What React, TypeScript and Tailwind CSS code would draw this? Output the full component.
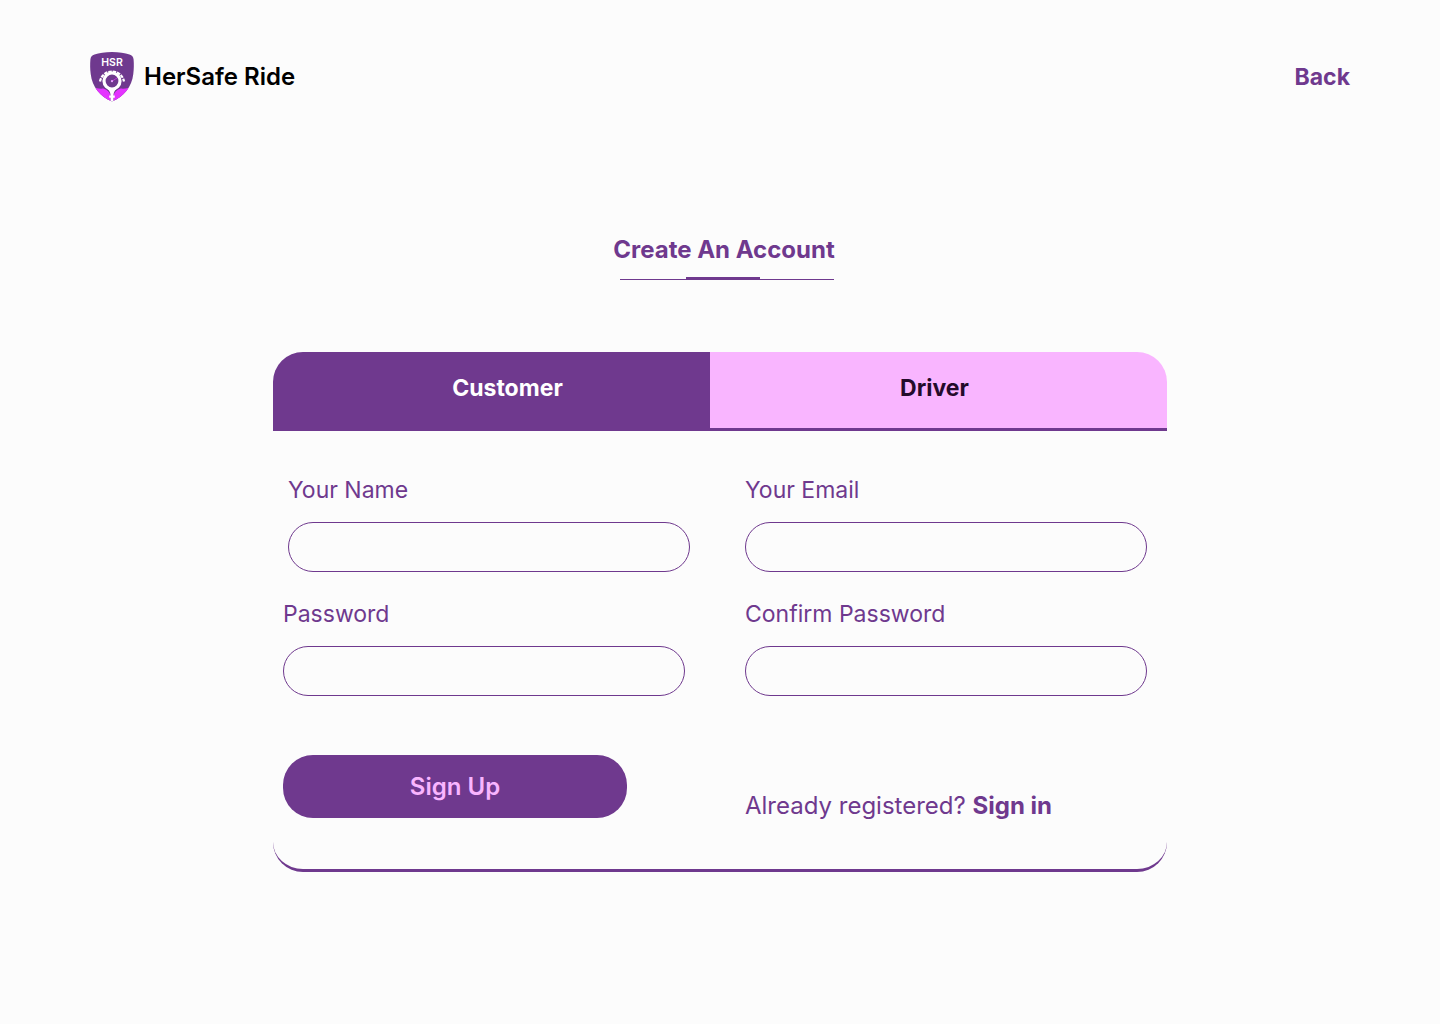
import { useState } from "react";

function Logo() {
  return (
    <svg viewBox="0 0 44 50" className="h-[50px] w-11 shrink-0" aria-hidden="true">
      <defs>
        <clipPath id="shield">
          <path d="M22 0C29 0 35 .9 39.5 2.4C42 3.2 43.4 4.8 43.6 7.4C44 12 43.9 17 43.3 22C41.8 35 34 44.5 22 49.6C10 44.5 2.2 35 .7 22C.1 17 0 12 .4 7.4C.6 4.8 2 3.2 4.5 2.4C9 .9 15 0 22 0Z" />
        </clipPath>
      </defs>
      <g clipPath="url(#shield)">
        <rect width="44" height="50" fill="#6f398e" />
        <path d="M0 34C5 36 9 37 13.5 36.5C17.5 38 20 40.5 20.5 44V50H0ZM44 34C39 36 35 37 30.5 36.5C26.5 38 24 40.5 23.5 44V50H44Z" fill="#e433ff" />
        <path d="M10 29.5A12.2 12.2 0 0 1 34 29.5" fill="none" stroke="#fff" strokeWidth="2.2" strokeDasharray="3.4 1" />
        <circle cx="22" cy="29" r="8" fill="none" stroke="#fff" strokeWidth="3.2" />
        <path d="M15.5 35C19 38 20.4 40 20.6 43.5H19.2V45.7H20.6V50H23.4V45.7H24.8V43.5H23.4C23.6 40 25 38 28.5 35L25 36.5H19Z" fill="#fff" />
        <path d="M21.5 29.5L27 26" stroke="#e433ff" strokeWidth="1" opacity=".7" />
        <circle cx="22" cy="29.2" r="1.1" fill="#e8a6ff" />
        <text x="22" y="14.4" textAnchor="middle" fill="#fff" fontSize="10.5" fontWeight="600" fontFamily="Inter, sans-serif">HSR</text>
      </g>
    </svg>
  );
}

function Field({ id, label, type }: { id: string; label: string; type: string }) {
  return (
    <div className="flex min-w-0 flex-col gap-4">
      <label htmlFor={id} className="text-[23px] leading-8">{label}</label>
      <input id={id} name={id} type={type} className="h-[50px] w-full rounded-[25px] border border-[#6f398e] bg-transparent px-5 text-lg outline-none" />
    </div>
  );
}

export default function App() {
  const [role, setRole] = useState("customer");
  const active = "bg-[#6f398e] text-white";
  const idle = "bg-[#f9b5ff] text-[#240b2b]";
  return (
    <div className="min-h-screen bg-[#fcfcfc] pb-16 font-['Inter',sans-serif] text-[#6f398e]">
      <header className="flex items-center justify-between px-[90px] pt-[52px]">
        <a href="#" className="flex items-center gap-2.5 text-2xl font-semibold text-black">
          <Logo />
          HerSafe Ride
        </a>
        <a href="#" className="text-[23px] leading-8 font-bold">Back</a>
      </header>

      <main className="mx-auto mt-[132px] max-w-[894px]">
        <div className="flex flex-col items-center pl-2">
          <h1 className="text-2xl font-bold">Create An Account</h1>
          <div className="mt-[11px] ml-1.5 flex w-[214px] justify-center border-b border-[#6f398e] pr-2">
            <span className="-mb-px h-[3px] w-[74px] bg-[#6f398e]" />
          </div>
        </div>

        <section className="mt-[72px] rounded-[30px] border-b-[3px] border-[#6f398e]">
          <div className="grid grid-cols-[437fr_457fr] overflow-hidden rounded-t-[30px] border-b-[3px] border-[#6f398e]">
            <button type="button" onClick={() => setRole("customer")} className={`h-[76px] pb-1 pl-8 text-[23px] font-bold ${role === "customer" ? active : idle}`}>Customer</button>
            <button type="button" onClick={() => setRole("driver")} className={`h-[76px] pr-2 pb-1 text-[23px] font-bold ${role === "driver" ? active : idle}`}>Driver</button>
          </div>
          <form className="pt-[43px] pb-[51px]" onSubmit={(e) => e.preventDefault()}>
            <div className="grid grid-cols-2 gap-[55px] pr-5 pl-[15px]">
              <Field id="name" label="Your Name" type="text" />
              <Field id="email" label="Your Email" type="email" />
            </div>
            <div className="mt-[26px] grid grid-cols-2 gap-[60px] pr-5 pl-2.5">
              <Field id="password" label="Password" type="password" />
              <Field id="confirm" label="Confirm Password" type="password" />
            </div>
            <div className="mt-[59px] grid grid-cols-2 items-end gap-[60px] pr-5 pl-2.5">
              <button type="submit" className="h-[63px] w-[344px] rounded-[30px] bg-[#6f398e] text-2xl font-semibold text-[#f9b5ff]">Sign Up</button>
              <p className="-mb-1 text-2xl whitespace-nowrap">
                Already registered? <a href="#" className="font-bold">Sign in</a>
              </p>
            </div>
          </form>
        </section>
      </main>
    </div>
  );
}
